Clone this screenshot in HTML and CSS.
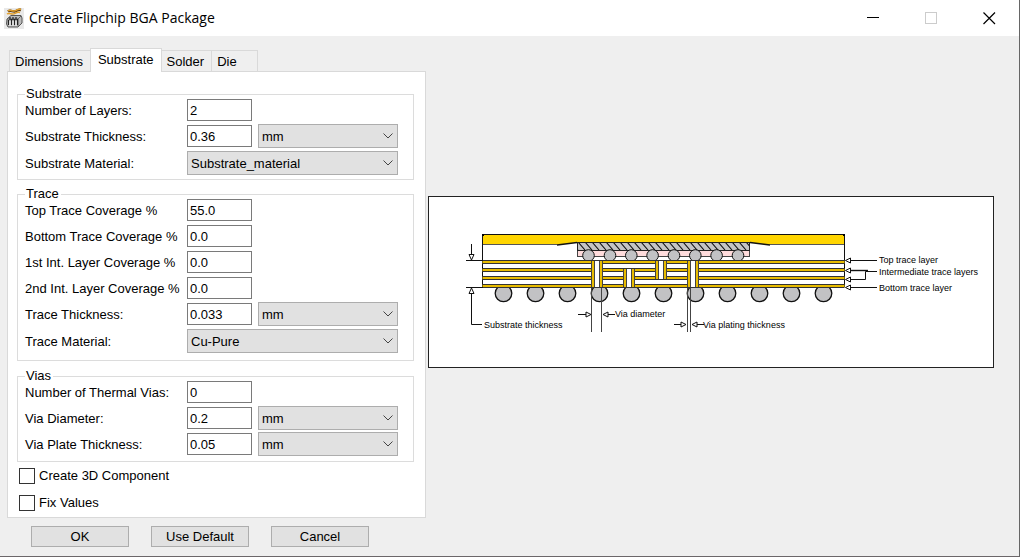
FILE: index.html
```html
<!DOCTYPE html>
<html lang="en">
<head>
<meta charset="utf-8">
<title>Create Flipchip BGA Package</title>
<link rel="stylesheet" href="styles.css">
</head>
<body>
<div class="dialog">
  <header class="titlebar">
    <svg class="app-icon" width="20" height="21" viewBox="0 0 20 21" aria-hidden="true">
      <rect width="20" height="21" fill="#e9e9e9"/>
      <path d="M4 3.500C7 1 9 5 12 3S15 1.500 17 2" fill="none" stroke="#5a3a10" stroke-width="2.500"/>
      <path d="M4 3C7 .8 9 4.500 12 2.500S15 1 17 1.500M3 6C6 4 8 7.500 11 5.500S14 4 16 4.500" fill="none" stroke="#e3a02c" stroke-width="1.500"/>
      <path d="M3 11L7 7.500H17L18 10V15L14 19H4L2.500 16Z" fill="#bbb" stroke="#555"/>
      <path d="M3 11H14L17 8M14 11V18" fill="none" stroke="#666"/>
      <path d="M4.500 12V17M7.500 11V17M10.500 11V17M13.500 11V17M6 9V12M9 9V12M12 9V12" stroke="#222" stroke-width="1.200"/>
      <path d="M6 13V18M9 13V18M12 13V18" stroke="#fff"/>
    </svg>
    <h1 class="title">Create Flipchip BGA Package</h1>
    <div class="window-buttons">
      <button type="button" class="window-button" aria-label="Minimize"><svg width="13" height="13" viewBox="0 0 13 13"><path d="M0 5.500H12" stroke="#000"/></svg></button>
      <button type="button" class="window-button" aria-label="Maximize" disabled><svg width="13" height="13" viewBox="0 0 13 13"><rect x=".5" y=".5" width="11" height="11" fill="none" stroke="#ccc"/></svg></button>
      <button type="button" class="window-button" aria-label="Close"><svg width="13" height="13" viewBox="0 0 13 13"><path d="M.5 .5L12 12M12 .5L.5 12" stroke="#000" stroke-width="1.200"/></svg></button>
    </div>
  </header>

  <main class="content">
    <form class="settings" id="settings">
      <div class="tabs" role="tablist">
        <button type="button" class="tab" role="tab" aria-selected="false">Dimensions</button>
        <button type="button" class="tab tab-active" role="tab" aria-selected="true">Substrate</button>
        <button type="button" class="tab" role="tab" aria-selected="false">Solder</button>
        <button type="button" class="tab tab-last" role="tab" aria-selected="false">Die</button>
      </div>
      <div class="panel" role="tabpanel">
        <fieldset class="group">
          <legend class="legend">Substrate</legend>
          <div class="row"><label for="layers">Number of Layers:</label><input class="text" id="layers" type="text" value="2"></div>
          <div class="row"><label for="sub-thick">Substrate Thickness:</label><input class="text" id="sub-thick" type="text" value="0.36">
            <div class="drop"><select class="select" aria-label="Substrate thickness unit"><option>mm</option></select><svg class="arrow" viewBox="0 0 10 6"><path d="M.5 .5L5 5L9.500 .5"/></svg></div></div>
          <div class="row row-tall"><label for="sub-mat">Substrate Material:</label>
            <div class="drop drop-wide"><select class="select" id="sub-mat"><option>Substrate_material</option></select><svg class="arrow" viewBox="0 0 10 6"><path d="M.5 .5L5 5L9.500 .5"/></svg></div></div>
        </fieldset>

        <fieldset class="group group-trace">
          <legend class="legend">Trace</legend>
          <div class="row"><label for="top-cov">Top Trace Coverage %</label><input class="text" id="top-cov" type="text" value="55.0"></div>
          <div class="row"><label for="bot-cov">Bottom Trace Coverage %</label><input class="text" id="bot-cov" type="text" value="0.0"></div>
          <div class="row"><label for="int1-cov">1st Int. Layer Coverage %</label><input class="text" id="int1-cov" type="text" value="0.0"></div>
          <div class="row"><label for="int2-cov">2nd Int. Layer Coverage %</label><input class="text" id="int2-cov" type="text" value="0.0"></div>
          <div class="row"><label for="tr-thick">Trace Thickness:</label><input class="text" id="tr-thick" type="text" value="0.033">
            <div class="drop"><select class="select" aria-label="Trace thickness unit"><option>mm</option></select><svg class="arrow" viewBox="0 0 10 6"><path d="M.5 .5L5 5L9.500 .5"/></svg></div></div>
          <div class="row row-tall"><label for="tr-mat">Trace Material:</label>
            <div class="drop drop-wide"><select class="select" id="tr-mat"><option>Cu-Pure</option></select><svg class="arrow" viewBox="0 0 10 6"><path d="M.5 .5L5 5L9.500 .5"/></svg></div></div>
        </fieldset>

        <fieldset class="group group-vias">
          <legend class="legend">Vias</legend>
          <div class="row"><label for="vias">Number of Thermal Vias:</label><input class="text" id="vias" type="text" value="0"></div>
          <div class="row"><label for="via-dia">Via Diameter:</label><input class="text" id="via-dia" type="text" value="0.2">
            <div class="drop"><select class="select" aria-label="Via diameter unit"><option>mm</option></select><svg class="arrow" viewBox="0 0 10 6"><path d="M.5 .5L5 5L9.500 .5"/></svg></div></div>
          <div class="row"><label for="via-plate">Via Plate Thickness:</label><input class="text" id="via-plate" type="text" value="0.05">
            <div class="drop"><select class="select" aria-label="Via plate thickness unit"><option>mm</option></select><svg class="arrow" viewBox="0 0 10 6"><path d="M.5 .5L5 5L9.500 .5"/></svg></div></div>
        </fieldset>

        <div class="checks">
          <label class="check"><input class="box" type="checkbox">Create 3D Component</label>
          <label class="check"><input class="box" type="checkbox">Fix Values</label>
        </div>
      </div>
    </form>

    <figure class="figure">
      <svg class="diagram" viewBox="429 197 564 170" role="img" aria-label="Package cross-section">
        <defs>
          <pattern id="hatch" width="7" height="8" patternUnits="userSpaceOnUse" x="578" y="242">
            <rect width="7" height="8" fill="#c4c4c4"/>
            <path d="M0 0L7 8M-7 0L0 8M7 0L14 8" stroke="#111" stroke-width="1.100"/>
          </pattern>
          <circle id="bump" r="5.800" cy="255.500"/>
          <circle id="ball" r="8.300" cy="293.300"/>
          <g id="band">
            <rect x="482.500" width="362" height="3" fill="#e8bc00"/>
            <path d="M482.500 0H844.500M482.500 3H844.500" stroke="#333"/>
          </g>
        </defs>

        <path d="M482.500 234.500H844.500V245H770L750 242.500H577L557 245H482.500Z" fill="#ffd500"/>
        <path d="M482.500 244.500H557M770 244.500H844.500" stroke="#555" fill="none"/>
        <path d="M557 245L577 242.500M750 242.500L770 245" stroke="#111" stroke-width="1.300" fill="none"/>
        <path d="M482.500 287V234.500H844.500V287" fill="none" stroke="#111"/>
        <path d="M482 234h2v2h-2zM843 234h2v2h-2zM482 267h2v2h-2zM843 267h2v2h-2z"/>

        <rect x="577.500" y="250.500" width="172" height="6" fill="#ffdcdc" stroke="#444"/>
        <rect x="577.500" y="242.500" width="172" height="8" fill="url(#hatch)" stroke="#222"/>
        <g fill="#c2c2c4" stroke="#111">
          <use href="#bump" x="588.500"/><use href="#bump" x="610"/><use href="#bump" x="631.300"/><use href="#bump" x="652.600"/>
          <use href="#bump" x="674"/><use href="#bump" x="695.300"/><use href="#bump" x="716.600"/><use href="#bump" x="738"/>
        </g>
        <g fill="#c2c2c4" stroke="#111" stroke-width="1.300">
          <use href="#ball" x="503.500"/><use href="#ball" x="535.500"/><use href="#ball" x="567.500"/><use href="#ball" x="599.500"/>
          <use href="#ball" x="631.500"/><use href="#ball" x="663.500"/><use href="#ball" x="695.500"/><use href="#ball" x="727.500"/>
          <use href="#ball" x="759.500"/><use href="#ball" x="791.500"/><use href="#ball" x="823.500"/>
        </g>

        <rect x="483" y="260.500" width="361" height="27" fill="#fff"/>
        <use href="#band" y="260.500"/><use href="#band" y="268.500"/><use href="#band" y="276.500"/><use href="#band" y="284.500"/>

        <g stroke="#444">
          <path d="M591.500 261H602V287H591.500zM623.500 269H634V287H623.500zM655.500 261H666V279H655.500zM687.500 261H698V287H687.500z" fill="#e8bc00" stroke="none"/>
          <path d="M594.500 261H599.500V287H594.500zM626.500 269H631.500V287H626.500zM658.500 261H663.500V279H658.500zM690.500 261H695.500V287H690.500z" fill="#fff" stroke="none"/>
          <path d="M591.500 261V287M594.500 261V287M599.500 261V287M602.500 261V287M623.500 269V287M626.500 269V287M631.500 269V287M634.500 269V287M655.500 261V279M658.500 261V279M663.500 261V279M666.500 261V279M687.500 261V287M690.500 261V287M695.500 261V287M698.500 261V287" fill="none"/>
        </g>

        <g class="lines">
          <path d="M466 260.500H483M466 287.500H483M471.500 244V254M471.500 294V324.500H482"/>
          <path d="M591.500 288V332M601.500 288V332M687.500 288V332M690.500 288V332" stroke="#444"/>
          <path d="M578 314.500H586M608 314.500H615M674 324.500H681M697 324.500H704"/>
          <path d="M851 260.500H877M851 287.500H877M851 279.500H865.500V271.500H877"/>
          <path d="M850 270.500H868" stroke-width="1.400"/>
        </g>
        <g class="heads">
          <path d="M469 254.500H474L471.500 260Z"/><path d="M469 293.500H474L471.500 288Z"/>
          <path d="M586 312V317L591 314.500Z"/><path d="M608 312V317L603 314.500Z"/>
          <path d="M681 322V327L686 324.500Z"/><path d="M697 322V327L692 324.500Z"/>
          <path d="M850.500 258V263L845.500 260.500Z"/><path d="M850.500 268V273L845.500 270.500Z"/>
          <path d="M850.500 277V282L845.500 279.500Z"/><path d="M850.500 285V290L845.500 287.500Z"/>
        </g>
        <g class="notes">
          <text x="879" y="263">Top trace layer</text>
          <text x="879" y="275">Intermediate trace layers</text>
          <text x="879" y="291">Bottom trace layer</text>
          <text x="484" y="328">Substrate thickness</text>
          <text x="615" y="317">Via diameter</text>
          <text x="703" y="328">Via plating thickness</text>
        </g>
      </svg>
    </figure>
  </main>

  <footer class="actions">
    <button class="action" type="submit" form="settings">OK</button>
    <button class="action" type="button">Use Default</button>
    <button class="action" type="button">Cancel</button>
  </footer>
</div>
</body>
</html>
```
FILE: styles.css
```css
* { box-sizing: border-box; }

body {
  margin: 0;
  font: 13px/16px "Liberation Sans", Arial, sans-serif;
  color: #000;
}

button, input, select { font: inherit; color: inherit; margin: 0; border-radius: 0; }

.dialog {
  display: flex;
  flex-direction: column;
  min-height: 100vh;
  background: #efefef;
  border-right: 1px solid #666;
  border-bottom: 1px solid #6b6669;
}

.titlebar {
  display: flex;
  align-items: center;
  height: 36px;
  padding-left: 4px;
  background: #fff;
}
.app-icon { margin-right: 5px; }
.title {
  flex: 1;
  margin: 0;
  font: 400 14px/20px "Open Sans", "Noto Sans", sans-serif;
}
.window-buttons { display: flex; padding-right: 1px; }
.window-button {
  display: grid;
  place-items: center;
  width: 58px;
  height: 34px;
  padding: 0;
  border: 0;
  background: none;
}

.content {
  display: flex;
  align-items: center;
  gap: 2px;
  padding: 12px 25px 0 7px;
}
.settings { flex: none; width: 419px; }

.tabs { display: flex; align-items: flex-end; padding-left: 2px; }
.tab {
  height: 21px;
  padding: 1px 7px 0 5px;
  border: 1px solid #d9d9d9;
  border-bottom: 0;
  border-right-width: 0;
  background: #efefef;
}
.tab-active {
  z-index: 1;
  height: 24px;
  margin-bottom: -1px;
  padding: 0 7px 1px;
  border-right-width: 1px;
  background: #fff;
}
.tab-active + .tab { border-left: 0; }
.tab-last { width: 47px; text-align: left; border-right-width: 1px; }

.panel {
  padding: 19px 11px 6px 9px;
  border: 1px solid #d9d9d9;
  background: #fff;
}

.group {
  min-width: 0;
  margin: 0;
  padding: 0 15px 2px 7px;
  border: 1px solid #dcdcdc;
}
.group-trace { margin-top: 11px; padding-bottom: 5px; }
.group-vias { margin-top: 12px; padding-bottom: 4px; }
.legend { padding: 0 2px 0 1px; line-height: 6px; }

.row {
  display: grid;
  grid-template-columns: 156px 65px 1fr;
  column-gap: 6px;
  align-items: center;
  height: 26px;
}
.row-tall { height: 28px; }
.row > label { padding-top: 2px; }

.text {
  width: 100%;
  height: 22px;
  padding: 0 2px;
  border: 1px solid #7a7a7a;
  background: #fff;
}

.drop { display: grid; align-items: center; }
.drop-wide { grid-column: 2 / 4; }
.select {
  grid-area: 1 / 1;
  width: 100%;
  height: 24px;
  padding: 1px 3px 0;
  border: 1px solid #adadad;
  background: #e1e1e1;
  appearance: none;
}
.arrow {
  grid-area: 1 / 1;
  justify-self: end;
  width: 10px;
  height: 6px;
  margin-right: 5px;
  fill: none;
  stroke: #444;
  pointer-events: none;
}

.checks { display: grid; gap: 11px; padding: 6px 0 0 2px; }
.check { display: flex; align-items: center; gap: 4px; }
.box {
  appearance: none;
  width: 16px;
  height: 16px;
  border: 1px solid #333;
  background: #fff;
}
.box:checked { background: #333; box-shadow: inset 0 0 0 3px #fff; }

.figure {
  flex: 1;
  min-width: 0;
  margin: 0 0 3px;
  border: 1px solid #222;
  background: #fff;
}
.diagram { display: block; width: 100%; height: auto; }
.lines { fill: none; stroke: #111; }
.heads { fill: #fff; stroke: #111; }
.notes { font: 9px "Liberation Sans", Arial, sans-serif; fill: #000; }

.actions { display: flex; gap: 22px; padding: 8px 31px; }
.action {
  width: 98px;
  height: 21px;
  padding: 0;
  border: 1px solid #adadad;
  background: #e1e1e1;
}
```
